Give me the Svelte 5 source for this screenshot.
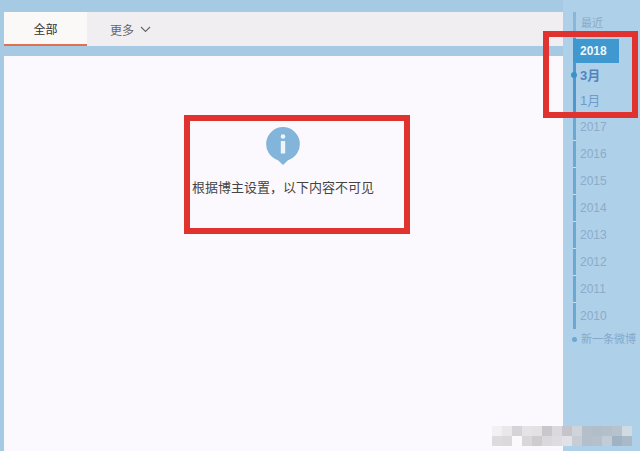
<script>
  const years = ['2017', '2016', '2015', '2014', '2013', '2012', '2011', '2010'];
  const mosaic = [
    ['#f3f0f3', '#e9e7ea', '#d6d3d8', '#e6e3e7', '#e4e1e5', '#c9c6cc', '#dcd9de', '#c6c4cb', '#cfd3da', '#b4bfca', '#b1bdc9', '#b3bfca', '#b7c2cd', '#d0dae3'],
    ['#dedbdf', '#dcd9dd', '#fbf9fb', '#dad7db', '#cecbd1', '#dbd8dc', '#dedce0', '#e2e1e5', '#c8cdd5', '#b3bfca', '#b5c0cb', '#c1ccd6', '#a0b3c5', '#a9b9c8']
  ];
</script>

<div class="page">
  <main class="left">
    <nav class="tabs">
      <div class="tab active">全部</div>
      <div class="tab more">
        更多
        <svg width="11" height="7" viewBox="0 0 11 7"><path d="M1 1l4.500 4.500L10 1" fill="none" stroke="#666" stroke-width="1.100" /></svg>
      </div>
    </nav>
    <section class="content">
      <div class="notice">
        <svg class="info" width="36" height="40" viewBox="0 0 36 40">
          <path d="M18 1a17 17 0 0 1 5 33.200L18 39l-5-4.800A17 17 0 0 1 18 1z" fill="#82b5d9" />
          <circle cx="18" cy="10.500" r="2.300" fill="#eef6fb" />
          <rect x="15.800" y="15" width="4.400" height="12.500" fill="#eef6fb" />
        </svg>
        <p>根据博主设置，以下内容不可见</p>
      </div>
    </section>
  </main>

  <aside class="side">
    <ul class="timeline">
      <li class="row recent">最近</li>
      <li class="row year-on"><span>2018</span></li>
      <li class="row month current">3月</li>
      <li class="row month">1月</li>
      {#each years as year}
        <li class="row year">{year}</li>
      {/each}
      <li class="first">新一条微博</li>
    </ul>
  </aside>

  <div class="mark mark-main"></div>
  <div class="mark mark-side"></div>

  <div class="mosaic">
    {#each mosaic as line}
      {#each line as colour}
        <i style="background: {colour}"></i>
      {/each}
    {/each}
  </div>
</div>

<style>
  :global(body) {
    margin: 0;
  }

  .page {
    position: relative;
    display: flex;
    width: 640px;
    height: 451px;
    overflow: hidden;
    background: #a6cae4;
    font-family: "Liberation Sans", "Noto Sans CJK SC", sans-serif;
  }

  .left {
    display: flex;
    flex-direction: column;
    width: 559px;
    margin-left: 4px;
    padding-top: 12px;
  }

  .tabs {
    display: flex;
    height: 34px;
    background: #f0eef0;
    font-size: 12px;
  }

  .tab {
    display: flex;
    align-items: center;
    justify-content: center;
  }

  .active {
    width: 83px;
    height: 32px;
    background: #fbf8f8;
    border-bottom: 2px solid #dd7152;
    color: #333;
  }

  .more {
    gap: 6px;
    margin-left: 23px;
    color: #666;
  }

  .content {
    flex: 1;
    margin-top: 10px;
    background: #fbf9fd;
  }

  .notice {
    display: flex;
    flex-direction: column;
    align-items: center;
    width: 190px;
    margin: 70px 0 0 184px;
  }

  .notice p {
    margin: 13px 0 0;
    color: #444;
    font-size: 13px;
    line-height: 17px;
    white-space: nowrap;
  }

  .side {
    flex: 1;
    background: #afd0e9;
  }

  .timeline {
    margin: 12px 0 0 10px;
    padding: 0;
    list-style: none;
    font-size: 12px;
  }

  .row {
    position: relative;
    display: flex;
    align-items: center;
    box-sizing: border-box;
    height: 27px;
    padding-left: 4px;
    border-left: 3px solid #6ba8d4;
    color: #8babc9;
  }

  .recent {
    height: 26px;
    padding-left: 5px;
    padding-bottom: 6px;
    border-left-color: #8bb6d8;
    color: #8aa9c6;
    font-size: 11px;
  }

  .year-on {
    height: 25px;
    padding-left: 0;
    border-left-color: #4496cd;
  }

  .year-on span {
    display: flex;
    align-items: center;
    box-sizing: border-box;
    width: 43px;
    height: 24px;
    padding-left: 4px;
    background: #3f98cf;
    color: #eef6fa;
    font-weight: 700;
  }

  .month {
    height: 25px;
    padding-bottom: 2px;
    border-left-color: #4f97cc;
    color: #6d9ccb;
    font-size: 13px;
  }

  .current {
    color: #4f86bd;
    font-weight: 700;
  }

  .current::before {
    content: "";
    position: absolute;
    left: -5px;
    top: 9px;
    width: 6px;
    height: 6px;
    border-radius: 50%;
    background: #3f8fc9;
  }

  .year {
    border-image: linear-gradient(#c5e0f2 2px, #6ba8d4 2px) 1;
  }

  .first {
    position: relative;
    height: 14px;
    margin-top: 3px;
    padding-left: 8px;
    color: #84a9cc;
    font-size: 11px;
    line-height: 14px;
    white-space: nowrap;
  }

  .first::before {
    content: "";
    position: absolute;
    left: -1px;
    top: 5px;
    width: 5px;
    height: 5px;
    border-radius: 50%;
    background: #6ba8d4;
  }

  .mark {
    position: absolute;
    box-sizing: border-box;
    border: 6px solid #e0322f;
  }

  .mark-main {
    left: 184px;
    top: 115px;
    width: 226px;
    height: 119px;
  }

  .mark-side {
    left: 543px;
    top: 31px;
    width: 95px;
    height: 87px;
  }

  .mosaic {
    position: absolute;
    left: 492px;
    top: 426px;
    display: grid;
    grid-template-columns: repeat(14, 10px);
    grid-auto-rows: 10px;
  }
</style>
